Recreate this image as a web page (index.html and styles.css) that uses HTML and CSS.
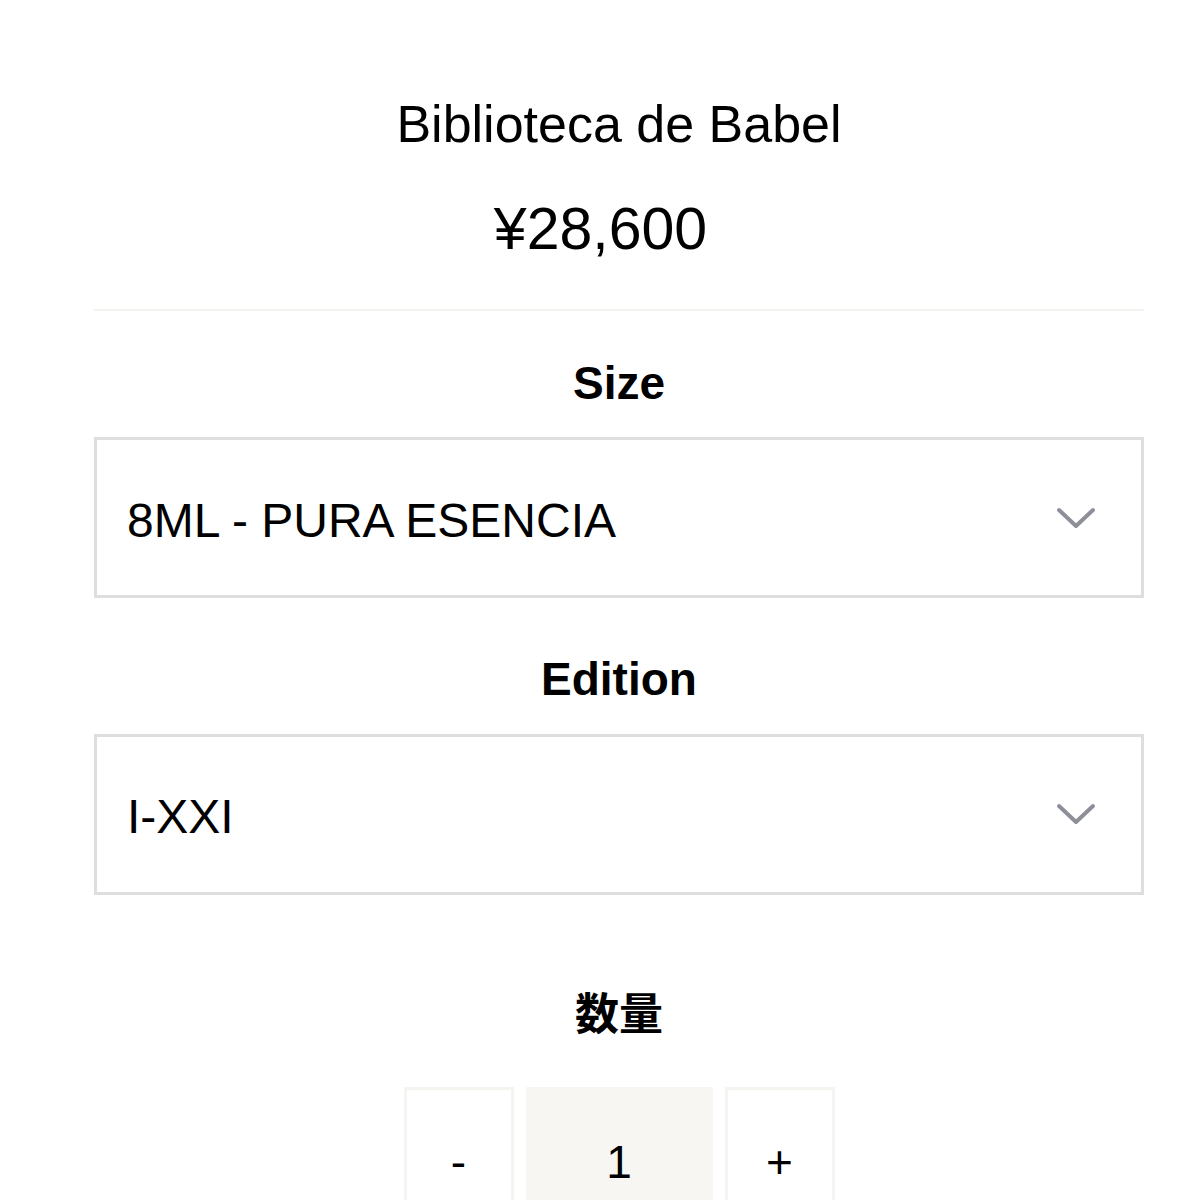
FILE: index.html
```html
<!DOCTYPE html>
<html lang="ja">
<head>
<meta charset="utf-8">
<title>Biblioteca de Babel</title>
<link rel="stylesheet" href="styles.css">
</head>
<body>
<main class="product">
  <h1 class="title">Biblioteca de Babel</h1>
  <div class="price">¥28,600</div>
  <hr class="divider">
  <div class="option">
    <div class="label">Size</div>
    <div class="select">
      <span class="select-value">8ML - PURA ESENCIA</span>
      <svg class="chevron" width="40" height="26" viewBox="0 0 40 26"><path d="M3 4 L20 20 L37 4" fill="none" stroke="#8d9098" stroke-width="4" stroke-linecap="round" stroke-linejoin="round"/></svg>
    </div>
  </div>
  <div class="option option-second">
    <div class="label">Edition</div>
    <div class="select">
      <span class="select-value">I-XXI</span>
      <svg class="chevron" width="40" height="26" viewBox="0 0 40 26"><path d="M3 4 L20 20 L37 4" fill="none" stroke="#8d9098" stroke-width="4" stroke-linecap="round" stroke-linejoin="round"/></svg>
    </div>
  </div>
  <div class="qty">
    <div class="qty-label">数量</div>
    <div class="qty-controls">
      <div class="qty-btn">-</div>
      <div class="qty-value">1</div>
      <div class="qty-btn">+</div>
    </div>
  </div>
</main>
</body>
</html>
```

FILE: styles.css
```css
html, body {
  margin: 0;
  padding: 0;
  background: #ffffff;
}
body {
  font-family: "Liberation Sans", Arial, "Noto Sans CJK JP", sans-serif;
  color: #000;
}
.product {
  padding: 93px 56px 0 94px;
  display: flex;
  flex-direction: column;
  align-items: stretch;
}
.title {
  margin: 0;
  font-size: 52px;
  font-weight: 400;
  line-height: 1.2;
  text-align: center;
}
.price {
  margin-top: 39px;
  padding-right: 37px;
  font-size: 59px;
  line-height: 1.2;
  text-align: center;
}
.divider {
  margin: 44px 0 0 0;
  border: 0;
  height: 2px;
  background: #f4f2ef;
}
.option {
  margin-top: 45px;
  display: flex;
  flex-direction: column;
}
.option-second {
  margin-top: 54px;
}
.label {
  font-size: 46px;
  font-weight: 700;
  line-height: 1.2;
  text-align: center;
}
.select {
  margin-top: 26px;
  height: 161px;
  box-sizing: border-box;
  border: 3px solid #dedede;
  display: flex;
  align-items: center;
  justify-content: space-between;
  padding: 6px 45px 0 30px;
}
.select-value {
  font-size: 48px;
  line-height: 1.2;
}
.chevron {
  display: block;
  margin-top: -4px;
}
.qty {
  margin-top: 90px;
  display: flex;
  flex-direction: column;
  align-items: center;
}
.qty-label {
  font-family: "Noto Sans CJK JP", sans-serif;
  font-size: 44px;
  font-weight: 700;
  line-height: 1.2;
}
.qty-controls {
  margin-top: 50px;
  display: flex;
  gap: 12px;
}
.qty-btn, .qty-value {
  height: 150px;
  box-sizing: border-box;
  display: flex;
  align-items: center;
  justify-content: center;
  font-size: 46px;
  line-height: 1;
}
.qty-btn {
  width: 110px;
  border: 3px solid #f6f4f0;
  background: #fff;
}
.qty-value {
  width: 187px;
  background: #f8f6f2;
}
```
